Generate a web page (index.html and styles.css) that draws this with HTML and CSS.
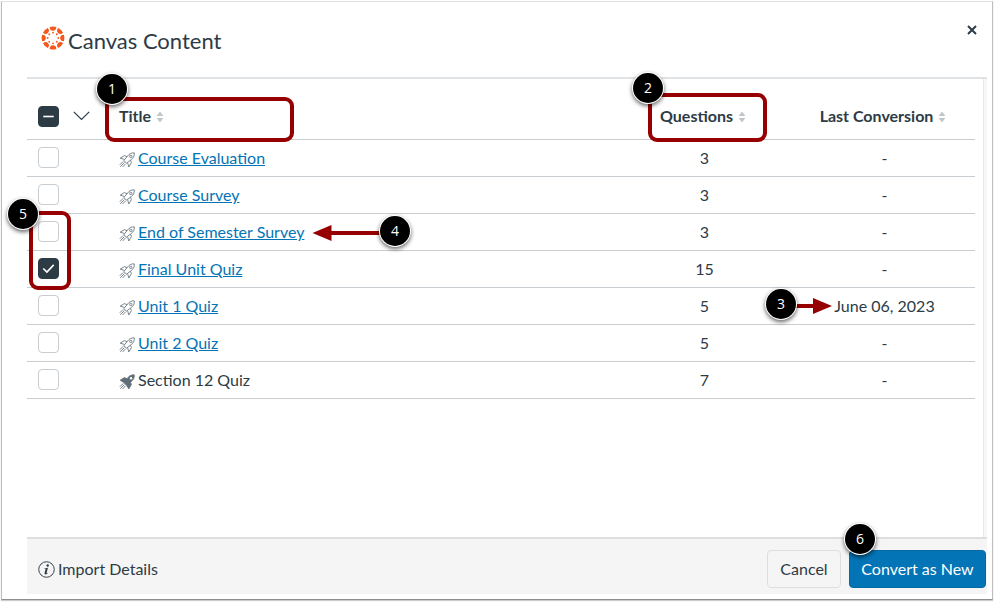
FILE: index.html
```html
<!DOCTYPE html>
<html lang="en">
<head>
  <meta charset="UTF-8">
  <meta name="viewport" content="width=device-width, initial-scale=1.0">
  <title>Canvas Content</title>
  <link rel="stylesheet" href="styles.css">
</head>
<body>
  <!-- shared icons -->
  <svg class="defs" width="0" height="0">
    <symbol id="sort" viewBox="0 0 8 12">
      <path d="M4 0.5L7.3 5H0.7zM4 11.5L0.7 7H7.3z" fill="#bfc5c9"/>
    </symbol>
    <symbol id="rocket" viewBox="0 0 16 16">
      <path d="M15.3 0.9C12.4 0.6 10.3 1.8 8.6 4L4.8 8.5L7.5 11.2L12.2 7.6C14.4 5.9 15.5 3.8 15.3 0.9z"/>
      <path d="M8 4.7L5.4 3.6L1.2 6.2L4.6 7.2L5.4 7.8M11.5 8.2L12.4 10.6L9.8 15L8.8 11.4L8.2 10.6"/>
      <path d="M4.2 9.4L0.8 12.8M5.4 10.6L1.2 14.8M6.6 11.8L3.6 15"/>
      <circle cx="11.8" cy="4.4" r="1.2"/>
    </symbol>
    <g id="petal"><path d="M-3.3 -10.9Q0 -12 3.3 -10.900A3.300 3.700 0 0 1 -3.300 -10.900z"/><circle cy="-5.300" r="0.900"/></g>
  </svg>

  <div class="modal">
    <header class="modal-header">
      <svg class="logo" viewBox="-12 -12 24 24" fill="#f4581c">
        <use href="#petal"/>
        <use href="#petal" transform="rotate(45)"/>
        <use href="#petal" transform="rotate(90)"/>
        <use href="#petal" transform="rotate(135)"/>
        <use href="#petal" transform="rotate(180)"/>
        <use href="#petal" transform="rotate(225)"/>
        <use href="#petal" transform="rotate(270)"/>
        <use href="#petal" transform="rotate(315)"/>
      </svg>
      <h1>Canvas Content</h1>
      <button class="close" aria-label="Close">
        <svg viewBox="0 0 10 10"><path d="M1 1L9 9M9 1L1 9"/></svg>
      </button>
    </header>

    <main class="modal-body">
      <table>
        <thead>
          <tr>
            <th class="col-select">
              <div class="select-all">
                <span class="checkbox checked"><svg viewBox="0 0 20 20"><path d="M4.5 10H15.5"/></svg></span>
                <svg class="chevron" viewBox="0 0 17 10"><path d="M0.8 0.8L8.5 8.5L16.2 0.8"/></svg>
              </div>
            </th>
            <th class="col-title">Title<svg class="sort"><use href="#sort"/></svg></th>
            <th class="col-num">Questions<svg class="sort"><use href="#sort"/></svg></th>
            <th class="col-num">Last Conversion<svg class="sort"><use href="#sort"/></svg></th>
          </tr>
        </thead>
        <tbody>
          <tr>
            <td><span class="checkbox"></span></td>
            <td class="name"><svg class="rocket"><use href="#rocket"/></svg><a href="#">Course Evaluation</a></td>
            <td>3</td>
            <td>-</td>
          </tr>
          <tr>
            <td><span class="checkbox"></span></td>
            <td class="name"><svg class="rocket"><use href="#rocket"/></svg><a href="#">Course Survey</a></td>
            <td>3</td>
            <td>-</td>
          </tr>
          <tr>
            <td><span class="checkbox"></span></td>
            <td class="name"><svg class="rocket"><use href="#rocket"/></svg><a href="#">End of Semester Survey</a></td>
            <td>3</td>
            <td>-</td>
          </tr>
          <tr>
            <td><span class="checkbox checked"><svg viewBox="0 0 20 20"><path d="M4.5 10L8.3 13.7L15.5 6.2"/></svg></span></td>
            <td class="name"><svg class="rocket"><use href="#rocket"/></svg><a href="#">Final Unit Quiz</a></td>
            <td>15</td>
            <td>-</td>
          </tr>
          <tr>
            <td><span class="checkbox"></span></td>
            <td class="name"><svg class="rocket"><use href="#rocket"/></svg><a href="#">Unit 1 Quiz</a></td>
            <td>5</td>
            <td>June 06, 2023</td>
          </tr>
          <tr>
            <td><span class="checkbox"></span></td>
            <td class="name"><svg class="rocket"><use href="#rocket"/></svg><a href="#">Unit 2 Quiz</a></td>
            <td>5</td>
            <td>-</td>
          </tr>
          <tr>
            <td><span class="checkbox"></span></td>
            <td class="name">
              <svg class="rocket solid" viewBox="0 0 16 16">
                <path d="M15.3 0.9C12.4 0.6 10.3 1.8 8.6 4L8 4.7L5.4 3.6L1.2 6.2L4.8 8.5L7.5 11.2L9.8 15L12.4 10.6L11.5 8.2C14.4 5.9 15.5 3.8 15.3 0.9z"/>
                <path d="M4.2 9.400L0.800 12.800M5.400 10.600L1.200 14.800M6.600 11.800L3.600 15"/>
                <circle cx="12" cy="4.2" r="1.2"/>
              </svg>Section 12 Quiz</td>
            <td>7</td>
            <td>-</td>
          </tr>
        </tbody>
      </table>
    </main>

    <footer class="modal-footer">
      <div class="details">
        <svg viewBox="0 0 16 16">
          <circle cx="8" cy="8" r="7.3" fill="none" stroke="#2d3b45" stroke-width="0.9"/>
          <circle cx="9.1" cy="4.2" r="1.1"/>
          <path d="M6.1 7L9.4 6.4L8 11.3Q8 11.9 9.6 10.8Q8.5 12.6 7 12.6Q5.8 12.5 6.2 11L7.2 7.5L6 7.5z"/>
        </svg>
        <span>Import Details</span>
      </div>
      <button class="btn">Cancel</button>
      <button class="btn primary">Convert as New</button>
    </footer>
  </div>

  <!-- callouts over the dialog -->
  <div class="box box-title"></div>
  <div class="box box-questions"></div>
  <div class="box box-checks"></div>
  <svg class="arrow arrow-date" viewBox="0 0 38 16"><path d="M0 6H18V0L37 8L18 16V10H0z"/></svg>
  <svg class="arrow arrow-name" viewBox="0 0 70 16"><path d="M70 6H19.5V0L0.5 8L19.5 16V10H70z"/></svg>
  <span class="badge b1">1</span>
  <span class="badge b2">2</span>
  <span class="badge b3">3</span>
  <span class="badge b4">4</span>
  <span class="badge b5">5</span>
  <span class="badge b6">6</span>
</body>
</html>
```
FILE: styles.css
```css
* {
  box-sizing: border-box;
}
body {
  margin: 0;
  height: 602px;
  padding: 1px 1px 2px 1px;
  overflow: hidden;
  background: #fff;
  color: #2d3b45;
  font-family: Lato, sans-serif;
  font-size: 16px;
}
.defs {
  position: absolute;
}
.modal {
  display: flex;
  flex-direction: column;
  width: 992px;
  height: 599px;
  padding: 0 5px 5px 25px;
  border: 1px solid #bdbdbd;
  border-top-color: #e0e0e0;
  border-bottom-color: #8e8e8e;
  box-shadow: 0 1px 1px #ccc;
}
.modal-header {
  display: flex;
  align-items: center;
  height: 77px;
  padding: 0 10px 0 14px;
  border-bottom: 2px solid #dfe3e6;
}
.logo {
  width: 24px;
  height: 24px;
  margin: -3px 3px 0 0;
}
h1 {
  flex: 1;
  margin: 1px 0 0;
  font-size: 22px;
  font-weight: normal;
}
.close {
  align-self: flex-start;
  margin-top: 23px;
  padding: 0;
  border: 0;
  background: none;
}
.close svg {
  display: block;
  width: 10px;
  height: 10px;
  stroke: #2d3b45;
  stroke-width: 2;
}
.modal-body {
  flex: 1;
  width: 960px;
  border-right: 3px solid #f7f7f8;
  box-shadow: inset -1px 0 #e8eaec;
}
table {
  width: 948px;
  border-collapse: separate;
  border-spacing: 0;
  table-layout: fixed;
}
th, td {
  height: 37px;
  padding: 0 1px 1px 0;
  border-bottom: 1px solid #c7cdd1;
  text-align: center;
  line-height: 20px;
}
th {
  height: 61px;
  padding: 14px 0 0;
  font-weight: bold;
}
td:first-child {
  padding-left: 11px;
  text-align: left;
}
.col-select {
  width: 92px;
}
.col-title, .name {
  text-align: left;
}
.col-num {
  width: 180px;
  padding-right: 4px;
}
.select-all {
  display: flex;
  align-items: center;
  gap: 14px;
  padding-left: 11px;
}
.checkbox {
  display: block;
  width: 21px;
  height: 21px;
  border: 1px solid #c7cdd1;
  border-radius: 4px;
  background: #fff;
}
.checkbox.checked {
  border-color: #2d3b45;
  background: #2d3b45;
}
.checkbox svg {
  display: block;
  fill: none;
  stroke: #fff;
  stroke-width: 1.7;
}
.chevron {
  width: 17px;
  height: 10px;
  fill: none;
  stroke: #2d3b45;
  stroke-width: 1.2;
}
.sort {
  width: 8px;
  height: 12px;
  margin-left: 5px;
  vertical-align: -1px;
}
.rocket {
  width: 16px;
  height: 16px;
  margin-right: 3px;
  vertical-align: -4px;
  fill: none;
  stroke: #6b7780;
  stroke-width: 0.9;
}
.rocket.solid path:first-child {
  fill: #5f6d76;
}
.rocket.solid circle {
  fill: #fff;
  stroke: none;
}
a {
  color: #0374b5;
  text-decoration: underline;
}
.modal-footer {
  display: flex;
  align-items: center;
  height: 57px;
  padding: 4px 1px 0 11px;
  border-top: 2px solid #dcdee0;
  background: #f5f5f5;
}
.details {
  display: flex;
  flex: 1;
  align-items: center;
  gap: 3px;
}
.details svg {
  width: 17px;
  height: 17px;
  margin-top: 1px;
  fill: #2d3b45;
}
.details span {
  margin-top: -1px;
}
.btn {
  height: 38px;
  width: 74px;
  padding: 0;
  border: 1px solid #dcdfe1;
  border-radius: 4px;
  background: #f5f5f5;
  color: #2d3b45;
  font: inherit;
}
.btn.primary {
  width: 137px;
  margin-left: 8px;
  border-color: #0369a3;
  background: #0374b5;
  color: #fff;
}

/* callouts */
.box {
  position: absolute;
  border: 4px solid #960000;
  border-radius: 9px;
}
.box-title {
  left: 105px;
  top: 97px;
  width: 189px;
  height: 45px;
}
.box-questions {
  left: 648px;
  top: 93px;
  width: 119px;
  height: 49px;
}
.box-checks {
  left: 29px;
  top: 211px;
  width: 42px;
  height: 79px;
}
.arrow {
  position: absolute;
  height: 16px;
  fill: #960000;
}
.arrow-date {
  left: 795px;
  top: 298px;
  width: 38px;
}
.arrow-name {
  left: 312px;
  top: 225px;
  width: 70px;
}
.badge {
  position: absolute;
  width: 30px;
  height: 30px;
  border-radius: 50%;
  background: #000;
  box-shadow: 0 0 0 1px #fff, 0 2px 4px 1px rgba(0,0,0,0.6);
  color: #fff;
  font: 14px/30px "Open Sans", sans-serif;
  text-align: center;
}
.b1 { left: 97px; top: 74px; }
.b2 { left: 633px; top: 73px; }
.b3 { left: 766px; top: 289px; }
.b4 { left: 380px; top: 216px; }
.b5 { left: 8px; top: 199px; }
.b6 { left: 845px; top: 524px; }
```
